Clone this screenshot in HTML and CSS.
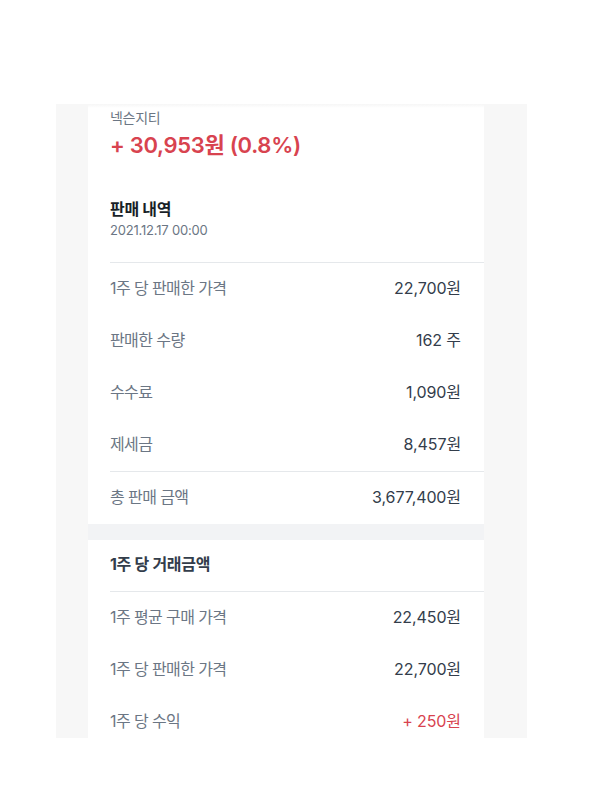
FILE: index.html
```html
<!DOCTYPE html>
<html lang="ko">
<head>
<meta charset="utf-8">
<link rel="stylesheet" href="styles.css">
</head>
<body>
<div class="panel">
  <div class="card">
    <div class="summary">
      <div class="stock-name">넥슨지티</div>
      <div class="profit">+ 30,953원 (0.8%)</div>
      <div class="history-title">판매 내역</div>
      <div class="history-date">2021.12.17 00:00</div>
    </div>
    <div class="divider"></div>
    <div class="row"><span class="label">1주 당 판매한 가격</span><span class="value">22,700원</span></div>
    <div class="row"><span class="label">판매한 수량</span><span class="value">162 주</span></div>
    <div class="row"><span class="label">수수료</span><span class="value">1,090원</span></div>
    <div class="row"><span class="label">제세금</span><span class="value">8,457원</span></div>
    <div class="divider"></div>
    <div class="row"><span class="label">총 판매 금액</span><span class="value">3,677,400원</span></div>
    <div class="band"></div>
    <div class="section-title">1주 당 거래금액</div>
    <div class="divider"></div>
    <div class="row"><span class="label">1주 평균 구매 가격</span><span class="value">22,450원</span></div>
    <div class="row"><span class="label">1주 당 판매한 가격</span><span class="value">22,700원</span></div>
    <div class="row"><span class="label">1주 당 수익</span><span class="value red">+ 250원</span></div>
  </div>
</div>
</body>
</html>
```

FILE: styles.css
```css
html, body {
  margin: 0;
  padding: 0;
  background: #ffffff;
}
body {
  font-family: Inter, "Noto Sans CJK KR", sans-serif;
  color: #333d4b;
}
.panel {
  margin: 104px 0 0 56px;
  width: 471px;
  height: 634px;
  background: #f7f7f7;
  overflow: hidden;
}
.card {
  margin-left: 32px;
  width: 396px;
  background: #ffffff;
  min-height: 100%;
}
.summary {
  padding: 4px 23px 23px 22px;
  background: linear-gradient(#f6f6f6, #ffffff 4px);
}
.stock-name {
  font-size: 14px;
  line-height: 20px;
  color: #6b7684;
  letter-spacing: -0.3px;
}
.profit {
  margin-top: 2px;
  font-size: 22px;
  line-height: 30px;
  font-weight: 600;
  color: #d8434f;
  letter-spacing: -0.3px;
}
.history-title {
  margin-top: 37px;
  font-size: 16px;
  line-height: 24px;
  font-weight: 700;
  color: #191f28;
  letter-spacing: -0.3px;
}
.history-date {
  font-size: 13px;
  line-height: 18px;
  color: #6b7684;
  letter-spacing: -0.2px;
}
.divider {
  height: 1px;
  margin-left: 22px;
  background: #e5e8eb;
}
.row {
  box-sizing: border-box;
  display: flex;
  justify-content: space-between;
  align-items: center;
  height: 52px;
  padding: 0 23px 5px 22px;
  font-size: 16px;
  letter-spacing: -0.6px;
}
.label {
  color: #6b7684;
}
.value {
  color: #333d4b;
  letter-spacing: -0.1px;
}
.value.red {
  color: #d8434f;
}
.band {
  height: 16px;
  background: #f2f3f5;
}
.section-title {
  padding: 12px 22px 15px;
  font-size: 16px;
  line-height: 24px;
  font-weight: 700;
  color: #333d4b;
  letter-spacing: -0.3px;
}
```
